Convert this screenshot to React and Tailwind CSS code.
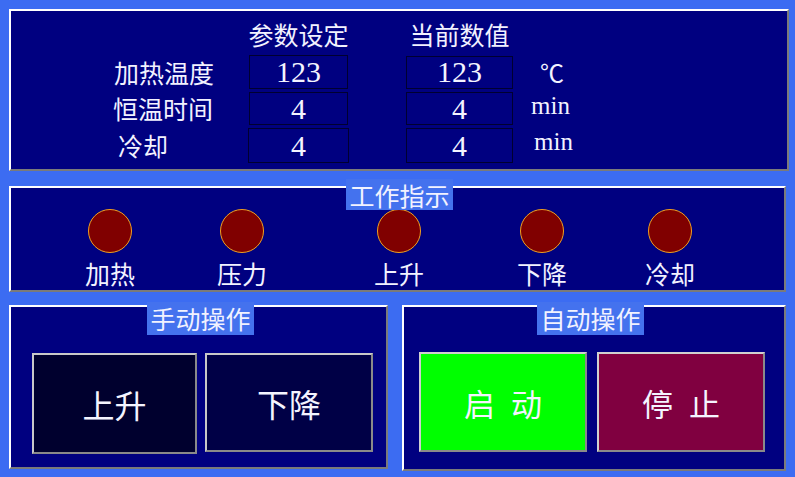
import React from "react";

const cjk = { fontFamily: '"Noto Sans CJK SC", "Noto Sans", sans-serif' };
const serif = { fontFamily: '"Liberation Serif", "Noto Sans CJK SC", serif' };

function Panel({ className = "", children }) {
  return (
    <div
      className={
        "relative bg-[#000080] border-2 border-t-white border-l-white border-r-[#7a7a7a] border-b-[#7a7a7a] " +
        className
      }
    >
      {children}
    </div>
  );
}

function Legend({ className = "", children }) {
  return (
    <div
      className={
        "absolute bg-[#4472ee] text-[#f2f2ff] text-[25px] leading-none flex items-center justify-center whitespace-nowrap " +
        className
      }
      style={cjk}
    >
      {children}
    </div>
  );
}

function Box({ w, h, children, className = "" }) {
  return (
    <div
      className={
        "border border-[#000030] flex items-center justify-center text-[30px] leading-none text-[#f4f4ff] " +
        w +
        " " +
        h +
        " " +
        className
      }
      style={serif}
    >
      {children}
    </div>
  );
}

function Lamp({ label, className = "" }) {
  return (
    <div className={"flex flex-col items-center w-[60px] " + className}>
      <div className="w-[44px] h-[44px] rounded-full bg-[#800000] border border-[#f0a020]" />
      <div className="mt-[8px] text-[25px] leading-none text-[#f2f2ff] whitespace-nowrap" style={cjk}>
        {label}
      </div>
    </div>
  );
}

export default function App() {
  return (
    <div className="w-[795px] h-[477px] bg-[#3c6cf2] overflow-hidden flex flex-col pt-[9px] pl-[9px]">
      {/* Panel 1 */}
      <Panel className="w-[780px] h-[162px] flex flex-col pl-[97px]">
        <div className="h-[44px] flex items-center pt-[2px] text-[25px] leading-none text-[#f2f2ff]" style={cjk}>
          <div className="w-[141px] shrink-0" />
          <div className="w-[99px] shrink-0 flex justify-center">
            <span className="whitespace-nowrap">参数设定</span>
          </div>
          <div className="w-[58px] shrink-0" />
          <div className="w-[107px] shrink-0 flex justify-center">
            <span className="whitespace-nowrap">当前数值</span>
          </div>
        </div>
        {/* row 1 */}
        <div className="flex items-center h-[34px]">
          <div className="w-[141px] pl-[6px] text-[25px] leading-none text-[#f2f2ff] whitespace-nowrap" style={cjk}>
            加热温度
          </div>
          <Box w="w-[99px]" h="h-[34px]">123</Box>
          <div className="w-[58px]" />
          <Box w="w-[107px]" h="h-[33px]">123</Box>
          <div className="ml-[27px] text-[24px] leading-none text-[#f2f2ff]" style={cjk}>
            ℃
          </div>
        </div>
        {/* row 2 */}
        <div className="flex items-center h-[33px] mt-[3px]">
          <div className="w-[141px] pl-[5px] text-[25px] leading-none text-[#f2f2ff] whitespace-nowrap" style={cjk}>
            恒温时间
          </div>
          <Box w="w-[99px]" h="h-[33px]">4</Box>
          <div className="w-[58px]" />
          <Box w="w-[107px]" h="h-[33px]">4</Box>
          <div className="ml-[18px] mb-[6px] text-[25px] leading-none text-[#f2f2ff]" style={serif}>
            min
          </div>
        </div>
        {/* row 3 */}
        <div className="flex items-center h-[35px] mt-[3px]">
          <div className="w-[140px] pl-[10px] text-[25px] leading-none text-[#f2f2ff] whitespace-nowrap" style={cjk}>
            冷却
          </div>
          <Box w="w-[101px]" h="h-[35px]">4</Box>
          <div className="w-[57px]" />
          <Box w="w-[107px]" h="h-[35px]">4</Box>
          <div className="ml-[21px] mb-[8px] text-[25px] leading-none text-[#f2f2ff]" style={serif}>
            min
          </div>
        </div>
      </Panel>

      {/* Panel 2 */}
      <Panel className="mt-[15px] w-[777px] h-[106px] flex items-start pt-[21px] pl-[69px]">
        <Legend className="left-[335px] -top-[9px] w-[107px] h-[31px] pt-[1px]">工作指示</Legend>
        <Lamp label="加热" />
        <Lamp label="压力" className="ml-[72px]" />
        <Lamp label="上升" className="ml-[97px]" />
        <Lamp label="下降" className="ml-[83px]" />
        <Lamp label="冷却" className="ml-[68px]" />
      </Panel>

      {/* Bottom panels */}
      <div className="mt-[13px] flex items-start">
        <Panel className="w-[379px] h-[164px] flex items-start pt-[46px] pl-[21px] gap-[8px]">
          <Legend className="left-[136px] -top-[5px] w-[107px] h-[33px]">手动操作</Legend>
          <div
            className="w-[165px] h-[101px] bg-[#00002e] border-2 border-t-[#c8c8c8] border-l-[#c8c8c8] border-r-[#8a8a8a] border-b-[#8a8a8a] flex items-center justify-center text-[32px] leading-none text-[#f4f4ff]"
            style={cjk}
          >
            上升
          </div>
          <div
            className="w-[168px] h-[99px] bg-[#000046] border-2 border-t-[#c8c8c8] border-l-[#c8c8c8] border-r-[#8a8a8a] border-b-[#8a8a8a] flex items-center justify-center text-[32px] leading-none text-[#f4f4ff]"
            style={cjk}
          >
            下降
          </div>
        </Panel>
        <Panel className="ml-[14px] w-[384px] h-[166px] flex items-start pt-[45px] pl-[15px] gap-[10px]">
          <Legend className="left-[133px] -top-[5px] w-[107px] h-[33px]">自动操作</Legend>
          <div
            className="w-[168px] h-[100px] bg-[#00ff00] border-2 border-t-[#d0d0d0] border-l-[#d0d0d0] border-r-[#8a8a8a] border-b-[#8a8a8a] flex items-center justify-center gap-[16px] text-[31px] leading-none text-[#f4f4ff]"
            style={cjk}
          >
            <span>启</span>
            <span>动</span>
          </div>
          <div
            className="w-[168px] h-[100px] bg-[#800040] border-2 border-t-[#d0d0d0] border-l-[#d0d0d0] border-r-[#8a8a8a] border-b-[#8a8a8a] flex items-center justify-center gap-[16px] text-[31px] leading-none text-[#f4f4ff]"
            style={cjk}
          >
            <span>停</span>
            <span>止</span>
          </div>
        </Panel>
      </div>
    </div>
  );
}
